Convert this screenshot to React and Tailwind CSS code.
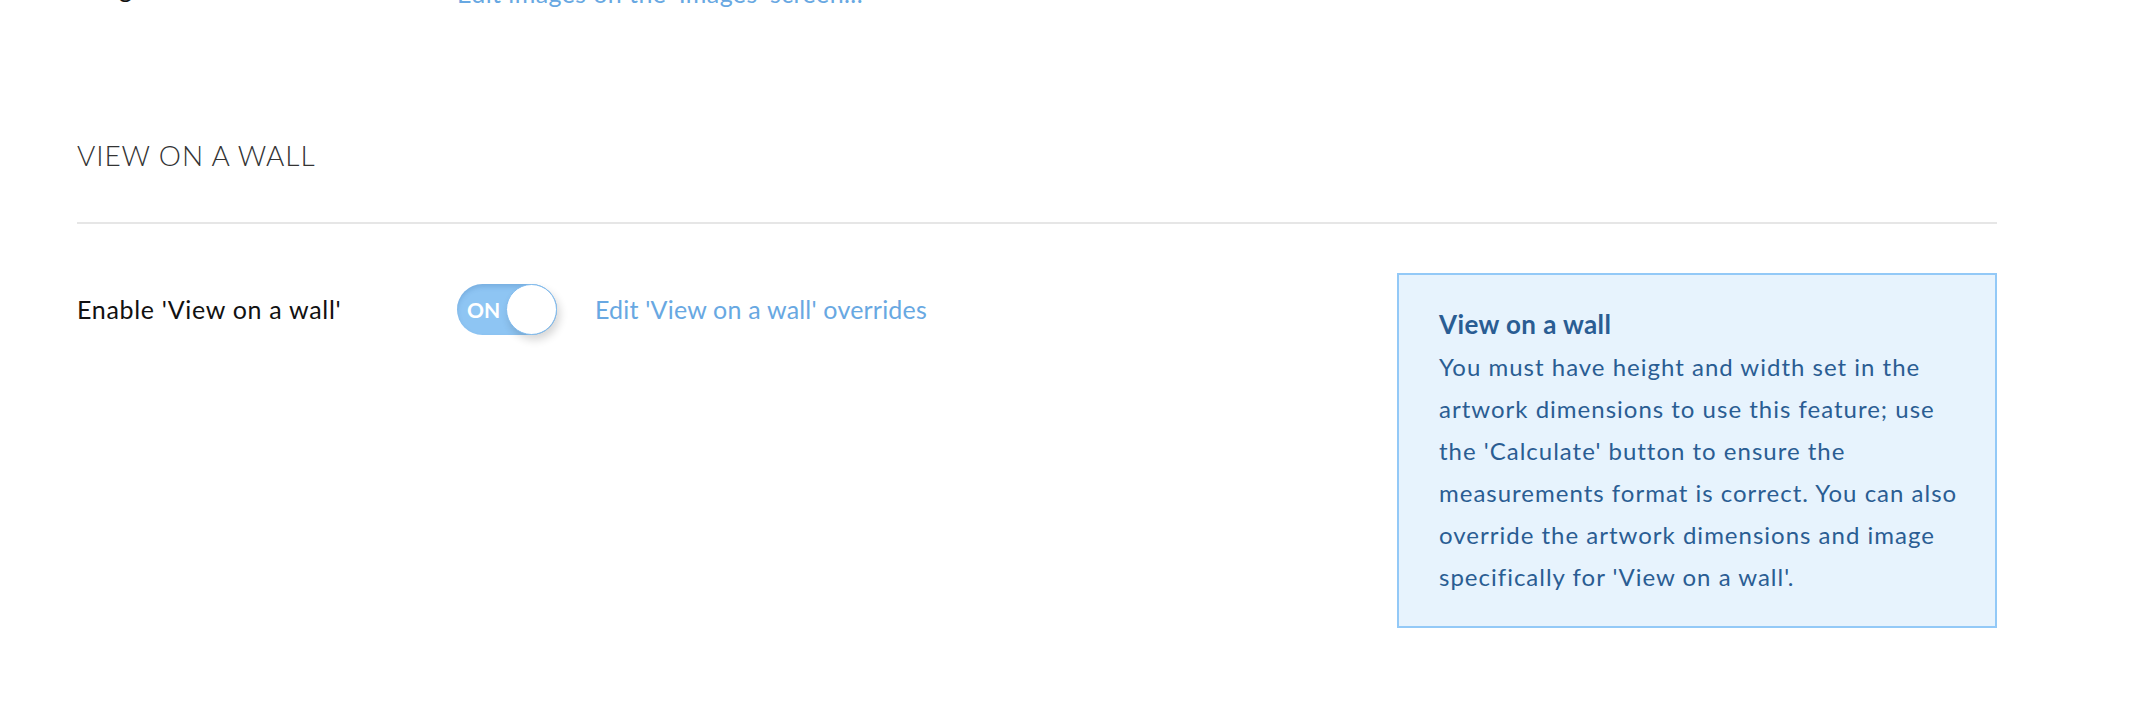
import React from 'react';

const BOX_LINES = [
  'You must have height and width set in the',
  'artwork dimensions to use this feature; use',
  "the 'Calculate' button to ensure the",
  'measurements format is correct. You can also',
  'override the artwork dimensions and image',
  "specifically for 'View on a wall'.",
];

function Toggle() {
  return (
    <div className="flex items-center w-[100px] h-[51px] rounded-full bg-[#8ec5f3] shadow-[inset_0_3px_4px_rgba(60,110,170,0.25)]">
      <span className="pl-[10px] text-[21px] font-bold text-white leading-none">ON</span>
      <span className="ml-auto w-[51px] h-[51px] rounded-full bg-white border border-[#80bbee] shadow-[3px_5px_8px_rgba(0,0,0,0.16)]" />
    </div>
  );
}

export default function App() {
  return (
    <div className="w-[2134px] h-[710px] overflow-hidden bg-white pl-[77px] font-['Lato','Liberation_Sans',sans-serif]">
      <div className="w-[1920px]">
        {/* previous row, cut off at the top */}
        <div className="flex items-start mt-[-23px] text-[25px] leading-[32px]">
          <div className="w-[380px] mt-[-5px] text-[#111] tracking-[0.7px]">Images</div>
          <div className="text-[#68a8e2] tracking-[0.4px]">Edit images on the 'Images' screen...</div>
        </div>

        {/* section header */}
        <div className="mt-[131px] pb-[51px] border-b-2 border-[#e6e6e6]">
          <h2 className="text-[28px] leading-[31px] font-light text-[#333] tracking-[0.9px]">VIEW ON A WALL</h2>
        </div>

        <div className="flex items-start justify-between mt-[49px]">
          <div className="flex items-center mt-[11px] text-[25px]">
            <div className="w-[380px] text-[#111] tracking-[0.7px]">Enable 'View on a wall'</div>
            <Toggle />
            <a className="ml-[38px] text-[#68a8e2] tracking-[0.2px]">Edit 'View on a wall' overrides</a>
          </div>

          <div className="w-[600px] border-2 border-[#93c9f7] bg-[#e7f3fd] pt-[27px] pb-[28px] pl-[40px] text-[#2a5d93]">
            <div className="text-[26px] leading-[44px] font-bold tracking-[0.4px]">View on a wall</div>
            {BOX_LINES.map((line) => (
              <div key={line} className="text-[24px] leading-[42px] whitespace-nowrap tracking-[1px]">
                {line}
              </div>
            ))}
          </div>
        </div>
      </div>
    </div>
  );
}
